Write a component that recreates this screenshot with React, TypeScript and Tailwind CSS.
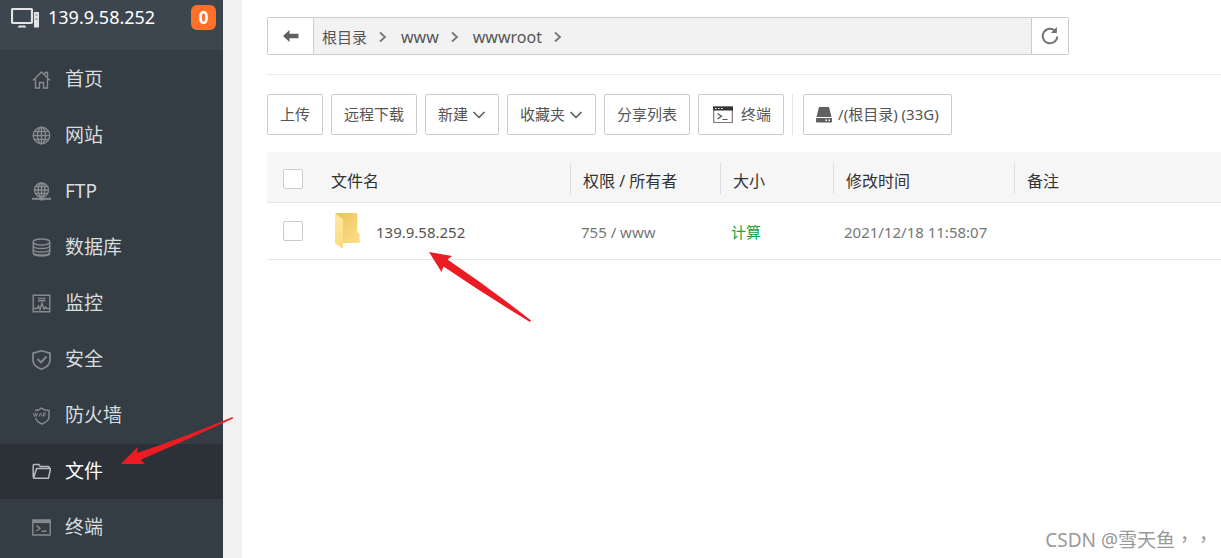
import type { ReactNode } from "react";

const icons: Record<string, ReactNode> = {
  home: (
    <>
      <path d="M1 10.5 9.5 2 18 10.5" />
      <path d="M3.5 9v9h4v-5.500h4V18h4V9M13 4V2.500h2.500V7" />
    </>
  ),
  site: (
    <>
      <circle cx="9.500" cy="9.500" r="8.300" />
      <ellipse cx="9.500" cy="9.500" rx="4" ry="8.300" />
      <path d="M9.500 1v17M1 9.500h17M2.500 5.500h14M2.500 13.500h14" />
    </>
  ),
  ftp: (
    <>
      <circle cx="9.500" cy="8" r="7" />
      <ellipse cx="9.500" cy="8" rx="3.400" ry="7" />
      <path d="M9.500 1v14M2.500 8h14M3.500 4.500h12M3.500 11.500h12" />
      <path d="M0 16.800h19" strokeWidth="2" />
      <path d="M7.500 16.800h4" strokeWidth="3.400" />
    </>
  ),
  database: (
    <>
      <ellipse cx="9.500" cy="4" rx="8.300" ry="3" />
      <path d="M1.200 4v11c0 4 16.600 4 16.600 0V4M1.200 7.500c0 4 16.600 4 16.600 0M1.200 11c0 4 16.600 4 16.600 0M1.200 14c0 4 16.600 4 16.600 0" />
    </>
  ),
  monitor: (
    <>
      <path d="M1.200 1.200h16.600v16.600H1.200zM6 4.500h7.500M6 6.800h7.500" />
      <path d="M2 14.500h3l1.500-2.500 1.500 3.500 2-6 2 5.500 1.500-2 1 1.500h3" />
    </>
  ),
  shield: (
    <>
      <path d="M9.500.800 18 3.200v7c0 4.500-4.500 7.500-8.500 9-4-1.500-8.500-4.500-8.500-9v-7z" strokeWidth="1.700" />
      <path d="m5.500 9 3.500 3.500 5.500-6" strokeWidth="1.900" />
    </>
  ),
  waf: (
    <>
      <path d="M3 4.500c3 0 5-1 6.500-2.500C11 3.500 13 4.500 17 4.500V11c0 3.500-4.500 6-7 7-2.500-1-5.500-3-6.500-6" />
      <path d="m1.500 7 1 3.500 1-3 1 3 1-3.500M7 10.500l1.500-3.500 1.500 3.500M11.500 10.500V7h2.500M11.500 9h2" strokeWidth="1" />
    </>
  ),
  files: (
    <path
      d="M1.200 15V3.500c0-.700.500-1 1-1h4.600l1.500 2h8c.700 0 1 .400 1 1v1.200M1.500 16.200 4.600 6.500h14l-2.200 9.700H2.200c-.700 0-1-.400-1-1"
      strokeWidth="1.500"
    />
  ),
  terminal: (
    <>
      <path d="M.8 2h17.400v15H.800z" />
      <path d="M1 3.500h17" strokeWidth="3.200" />
      <path d="m4.500 7.500 3.500 2.800L4.500 13M9.500 13.200h5" strokeWidth="1.500" />
    </>
  ),
};

const menu = [
  { icon: "home", label: "首页" },
  { icon: "site", label: "网站" },
  { icon: "ftp", label: "FTP" },
  { icon: "database", label: "数据库" },
  { icon: "monitor", label: "监控" },
  { icon: "shield", label: "安全" },
  { icon: "waf", label: "防火墙" },
  { icon: "files", label: "文件", active: true },
  { icon: "terminal", label: "终端" },
];

function Sidebar() {
  return (
    <aside className="w-[223px] shrink-0 bg-[#353d44]">
      <div className="flex h-[50px] items-start bg-[#3d464e] pt-1 pr-[7px] pl-[11px]">
        <svg viewBox="0 0 28 20" className="mt-1 h-5 w-7 shrink-0" fill="none">
          <rect x="1" y="1" width="20" height="14" rx="1" stroke="#e2e4e5" strokeWidth="2.200" />
          <path d="M8 17.500h6l1.500 2h-9z" fill="#e2e4e5" />
          <rect x="23" y="4" width="5" height="15.500" rx=".5" fill="#e2e4e5" />
          <path d="M24.500 7h2M24.500 11h2" stroke="#68717a" />
        </svg>
        <span className="ml-[9px] text-lg leading-[26px] text-white">139.9.58.252</span>
        <span className="mt-px ml-auto flex size-[25px] items-center justify-center rounded-md bg-[#ff7029] text-[17px] font-bold text-white">
          0
        </span>
      </div>
      <nav>
        <ul className="flex flex-col gap-px pt-0.5">
          {menu.map((item) => (
            <li key={item.label}>
              <a
                href="#"
                className={
                  item.active
                    ? "flex h-[55px] items-center gap-3.5 bg-[#2c3138] pl-8 text-[19px] text-white"
                    : "flex h-[55px] items-center gap-3.5 pl-8 text-[19px] text-[#d9dcde]"
                }
              >
                <svg
                  viewBox="0 0 19 20"
                  className={item.active ? "h-5 w-[19px] text-[#b8babc]" : "h-5 w-[19px] text-[#858a8e]"}
                  fill="none"
                  stroke="currentColor"
                  strokeWidth="1.400"
                >
                  {icons[item.icon]}
                </svg>
                {item.label}
              </a>
            </li>
          ))}
        </ul>
      </nav>
    </aside>
  );
}

function Crumb({ children }: { children: ReactNode }) {
  return (
    <li className="flex items-center">
      <a href="#">{children}</a>
      <svg viewBox="0 0 8 12" className="mr-3.5 ml-3 h-3 w-2" fill="none" stroke="#777" strokeWidth="1.800">
        <path d="m1 1.500 5 4.500-5 4.500" />
      </svg>
    </li>
  );
}

function PathBar() {
  return (
    <div className="flex h-[38px] w-full max-w-[802px] overflow-hidden rounded-xs border border-[#ccc] bg-[#f2f2f2]">
      <button aria-label="返回" className="flex w-[46px] items-center justify-center border-r border-[#ccc] bg-white">
        <svg viewBox="0 0 16 12" className="h-3 w-4" fill="#606060">
          <path d="M0 6 6.500 0v3.800H15.500v4.400H6.500V12z" />
        </svg>
      </button>
      <ol className="flex flex-1 items-center pt-0.5 pl-2 text-base text-[#555]">
        <Crumb>
          <span className="text-[15px]">根目录</span>
        </Crumb>
        <Crumb>www</Crumb>
        <Crumb>wwwroot</Crumb>
      </ol>
      <button aria-label="刷新" className="flex w-[37px] items-center justify-center border-l border-[#ccc] bg-white">
        <svg viewBox="0 0 18 18" className="size-[18px]" fill="none" stroke="#707070" strokeWidth="1.900">
          <path d="M14.300 4A7.300 7.300 0 1 0 16.300 9.500" />
          <path d="M15.900 0v6h-6z" fill="#707070" stroke="none" />
        </svg>
      </button>
    </div>
  );
}

function ToolButton({ children }: { children: ReactNode }) {
  return (
    <button className="flex h-[41px] items-center rounded-xs border border-[#ccc] bg-white px-3 text-[15px] whitespace-nowrap text-[#555]">
      {children}
    </button>
  );
}

function Caret() {
  return (
    <svg viewBox="0 0 14 8" className="ml-1 h-2 w-3.5" fill="none" stroke="#555" strokeWidth="1.500">
      <path d="m1.500 1 5.500 5.500L12.500 1" />
    </svg>
  );
}

function Toolbar() {
  return (
    <div className="flex items-center gap-2">
      <ToolButton>上传</ToolButton>
      <ToolButton>远程下载</ToolButton>
      <ToolButton>
        新建
        <Caret />
      </ToolButton>
      <ToolButton>
        收藏夹
        <Caret />
      </ToolButton>
      <ToolButton>分享列表</ToolButton>
      <ToolButton>
        <svg viewBox="0 0 20 18" className="mr-2 ml-0.5 h-[18px] w-5" fill="none">
          <path d="M.7 1h18.600v15.500H.700z" fill="#fff" stroke="#8b7774" strokeWidth="1.200" />
          <path d="M0 .500h20v4H0z" fill="#333" />
          <path d="M2 2.500h1.500M5 2.500h1.500M8 2.500h1.500" stroke="#fff" />
          <path d="m4.500 7.500 4 2.700-4 2.800M9.500 13.500h5" stroke="#555" strokeWidth="1.200" />
        </svg>
        终端
      </ToolButton>
      <div className="flex h-[41px] border-l border-[#e6e6e6] pl-2.5">
        <ToolButton>
          <svg viewBox="0 0 16 16" className="mr-1.5 size-4" fill="#606060">
            <path d="M3 0h10l2.500 10H.500z" />
            <path
              fillRule="evenodd"
              d="M.5 11h15a.5.500 0 0 1 .5.500v3a1 1 0 0 1-1 1H1a1 1 0 0 1-1-1v-3a.5.500 0 0 1 .5-.5zM9.500 12.500v1.500H11v-1.500zM12.500 12.500v1.500H14v-1.500z"
            />
          </svg>
          /(根目录) (33G)
        </ToolButton>
      </div>
    </div>
  );
}

function Check({ label }: { label: string }) {
  return (
    <input
      type="checkbox"
      aria-label={label}
      className="ml-4 block size-5 appearance-none rounded-xs border border-[#ccc] bg-white checked:bg-[#20a53a]"
    />
  );
}

function HeadCell({ children }: { children: ReactNode }) {
  return (
    <th scope="col" className="pt-1 font-normal">
      <div className="flex h-[31px] items-center border-l border-[#ddd] pt-1 pl-3">{children}</div>
    </th>
  );
}

function FolderIcon() {
  return (
    <svg viewBox="0 0 75 108" className="h-9 w-[25px] shrink-0">
      <defs>
        <linearGradient id="folderBack" x1="0" x2="1" y1="0" y2="1">
          <stop offset="0" stopColor="#e8c25c" />
          <stop offset="1" stopColor="#ffe08a" />
        </linearGradient>
        <linearGradient id="folderFront" x1="0" x2="0" y1="0" y2="1">
          <stop offset="0" stopColor="#ffe9a6" />
          <stop offset="1" stopColor="#fbdb7c" />
        </linearGradient>
      </defs>
      <path d="M2 0h65v56l7 8v26H2z" fill="url(#folderBack)" />
      <path d="M0 1 24 18v89L0 91z" fill="url(#folderFront)" />
    </svg>
  );
}

function FileTable() {
  return (
    <table className="w-full table-fixed border-collapse text-left text-[15px] text-[#777]">
      <colgroup>
        <col className="w-[50px]" />
        <col className="w-[253px]" />
        <col className="w-[150px]" />
        <col className="w-[113px]" />
        <col className="w-[181px]" />
        <col />
      </colgroup>
      <thead>
        <tr className="h-[50px] border-b border-[#e8e8e8] bg-[#f6f6f6] text-base text-[#333]">
          <th scope="col" className="pt-1">
            <Check label="全选" />
          </th>
          <th scope="col" className="pt-2 pl-3.5 font-normal">
            文件名
          </th>
          <HeadCell>权限 / 所有者</HeadCell>
          <HeadCell>大小</HeadCell>
          <HeadCell>修改时间</HeadCell>
          <HeadCell>备注</HeadCell>
        </tr>
      </thead>
      <tbody>
        <tr className="h-[57px] border-b border-[#e8e8e8]">
          <td>
            <Check label="选择 139.9.58.252" />
          </td>
          <td className="pl-[18px]">
            <a href="#" className="flex items-center gap-4 text-[#555]">
              <FolderIcon />
              <span className="pt-1">139.9.58.252</span>
            </a>
          </td>
          <td className="pt-1 pl-[11px]">755 / www</td>
          <td className="pt-1 pl-[11px]">
            <a href="#" className="text-[#20a53a]">
              计算
            </a>
          </td>
          <td className="pt-1 pl-[11px]">2021/12/18 11:58:07</td>
          <td />
        </tr>
      </tbody>
    </table>
  );
}

export default function App() {
  return (
    <div className="relative flex min-h-screen overflow-hidden bg-[#f1f1f1] font-['Noto_Sans','Noto_Sans_CJK_SC',sans-serif]">
      <Sidebar />
      <main className="ml-[19px] min-w-0 flex-1 bg-white pt-[17px] pl-[25px]">
        <PathBar />
        <hr className="my-[19px] border-[#eaeaea]" />
        <Toolbar />
        <div className="pt-[17px]">
          <FileTable />
        </div>
      </main>
      <svg viewBox="0 0 112 48" className="absolute top-[417px] left-[121px] h-12 w-28" fill="#ed1c24">
        <path d="M0 47 17 29.700 16 36 Q64 20 111.500 0L112 1.500Q66 23 19.700 42.700L24 47z" />
      </svg>
      <svg viewBox="0 0 102 70" className="absolute top-[252px] left-[429px] h-[70px] w-[102px]" fill="#ed1c24">
        <path d="M0 0 23 4 18.500 7.500Q62 37 102 68.500L101 70Q58 44 14.500 14.500L12.500 20z" />
      </svg>
      <p className="absolute right-2 bottom-1 font-['Noto_Sans','Noto_Sans_CJK_TC',sans-serif] text-[19px] leading-7 text-[#999] [text-spacing-trim:space-all]">
        CSDN @雪天鱼，，
      </p>
    </div>
  );
}
